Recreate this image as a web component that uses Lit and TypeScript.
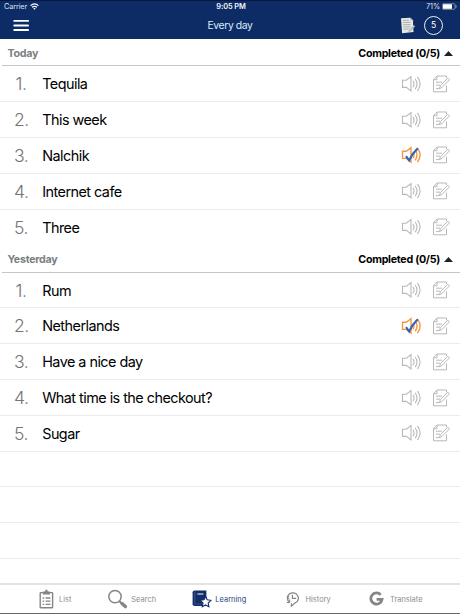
import { LitElement, html, svg, css } from "lit";
import { customElement, property } from "lit/decorators.js";

type Item = { text: string; done?: boolean };
type Group = { title: string; items: Item[] };

const groups: Group[] = [
  {
    title: "Today",
    items: [
      { text: "Tequila" },
      { text: "This week" },
      { text: "Nalchik", done: true },
      { text: "Internet cafe" },
      { text: "Three" },
    ],
  },
  {
    title: "Yesterday",
    items: [
      { text: "Rum" },
      { text: "Netherlands", done: true },
      { text: "Have a nice day" },
      { text: "What time is the checkout?" },
      { text: "Sugar" },
    ],
  },
];

const speaker = (done?: boolean) => html`<svg class="speaker" width="21" height="18" viewBox="0 0 21 18" fill="none"
  stroke=${done ? "#f09a42" : "#b8b8b8"} stroke-width=${done ? 1.4 : 1.1}>
  <path d="M1.5 5.2h3.8L10 1.6v14.4L5.3 12.4H1.5z" />
  <path d="M12.2 6.2q1.7 2.8 0 5.6 M14.4 4.2q3.2 4.8 0 9.6 M16.7 2.4q4.8 6.6 0 13.2" stroke-linecap="round" />
  ${done ? svg`<path d="M5 10.2l3.2 4.2Q11 7.8 16.8 2.2" stroke="#2f62c0" stroke-width="2.1" />` : ""}
</svg>`;

const note = html`<svg width="18" height="18" viewBox="0 0 18 18" fill="none" stroke="#b8b8b8" stroke-width="1">
  <path d="M14.5 3V1H5L1.5 4.7V16.8h13v-6.3 M5 1v3.7H1.5" />
  <path d="M4 7.2h6 M4 10.1h4 M4 13.6h3.4" />
  <path d="M7.4 13.6l1-2.9 7.4-7.6 1.7 1.7-7.4 7.6z" fill="#fff" />
</svg>`;

const tabIcons = {
  list: html`<svg width="16" height="20" viewBox="0 0 16 20" fill="none" stroke="#858585">
    <rect x="1.2" y="3.6" width="12.4" height="15.2" rx=".6" stroke-width="1.4" />
    <path d="M3.8 2.6h2.2Q6.2.5 7.4.5t1.4 2.1h2.2v2.9H3.8z" fill="#858585" stroke="none" />
    <path d="M3.6 9h1.6M3.6 12.2h1.6M3.6 15.4h1.6M6.6 9h4.8M6.6 12.2h4.8M6.6 15.4h4.8" stroke-width="1.3" />
  </svg>`,
  search: html`<svg width="20" height="20" viewBox="0 0 20 20" fill="none" stroke="#858585">
    <circle cx="7" cy="7.6" r="6.2" stroke-width="1.5" />
    <path d="M11.4 12.2l2.2 2" stroke-width="2" />
    <path d="M14 14.6l3.4 3" stroke-width="3.4" stroke-linecap="round" />
  </svg>`,
  learning: html`<svg width="20" height="20" viewBox="0 0 20 20">
    <path d="M2.6 1.4H14.4V17H2.6Q.6 17 .6 15.2V3.2Q.6 1.4 2.6 1.4z" fill="#132d69" />
    <path d="M2 15h9.6M2.8 2.4v11.4" stroke="#5a70a3" stroke-width=".6" />
    <path d="M5.4 5h6" stroke="#fff" stroke-width="1" />
    <path d="M13.6 7.4l1.6 3.4 3.8.5-2.8 2.7.7 3.8-3.3-1.8-3.3 1.8.7-3.8-2.8-2.7 3.8-.5z" fill="#fff" stroke="#132d69" stroke-width="1.1" />
  </svg>`,
  history: html`<svg width="14" height="17" viewBox="0 0 14 17" fill="none" stroke="#858585" stroke-width="1.2">
    <path d="M3.4 11.2A5.5 5.3 0 1 1 8.8 12.1L5.4 15.2V12.3" />
    <path d="M3.2 8.8A4 4 0 0 1 2.8 4.6" stroke-width=".8" />
    <path d="M6.4 3.8v3.5h3.7" />
    <path d="M.9 11.5h2.8V8.8" stroke-width="1" />
  </svg>`,
  translate: html`<svg width="15" height="16" viewBox="0 0 15 16" fill="none" stroke="#858585" stroke-width="2.8">
    <path d="M11.7 3.8A5.6 5.6 0 1 0 13 8.4H7.6" />
  </svg>`,
};

@customElement("word-group")
export class WordGroup extends LitElement {
  @property({ attribute: false }) group!: Group;

  static styles = css`
    :host { display: block; }
    .head {
      box-sizing: border-box; height: 27.2px; display: flex; align-items: center;
      justify-content: space-between; padding: 1px 7px 0 7.5px;
      font-weight: 700; font-size: 10.7px; color: #7b7f82; letter-spacing: -0.28px;
      background: linear-gradient(#c4c5c7, #c4c5c7) 2px 100% / 100% 1px no-repeat;
    }
    .done { color: #000; display: flex; align-items: center; gap: 4px; letter-spacing: -0.28px; }
    .row {
      box-sizing: border-box; height: 35.84px; display: flex; align-items: center;
      border-bottom: 1px solid #ebebed; padding: 0.4px 10.5px 0 14px;
    }
    :host(:not([last])) .row:last-child { border-color: transparent; }
    .num { width: 14px; margin-right: 14.2px; text-align: center; font-size: 17.6px; font-weight: 350; color: #757575; letter-spacing: -0.5px; }
    .text { flex: 1; font-size: 14.4px; color: #000; letter-spacing: -0.53px; }
    .speaker { margin-right: 10px; }
    svg { display: block; }
  `;

  render() {
    return html`
      <div class="head">
        <span>${this.group.title}</span>
        <span class="done">Completed (0/${this.group.items.length})
          <svg width="9" height="5" viewBox="0 0 9 5"><path d="M0 5L4.5 0 9 5z" fill="#222" /></svg>
        </span>
      </div>
      ${this.group.items.map(
        (item, i) => html`<div class="row">
          <span class="num">${i + 1}.</span><span class="text">${item.text}</span>
          ${speaker(item.done)}${note}
        </div>`
      )}
    `;
  }
}

@customElement("app-root")
export class AppRoot extends LitElement {
  static styles = css`
    :host {
      display: flex; flex-direction: column; box-sizing: border-box; height: 614px; width: 460px;
      overflow: hidden; background: #fff; font-family: Inter, "Liberation Sans", sans-serif;
      border-bottom: 1px solid #68686a;
    }
    header { height: 39px; flex: none; background: #0d2b64; color: #fff; box-sizing: border-box; border-top: 1px solid #06163e; }
    .status {
      height: 11px; display: grid; grid-template-columns: 1fr auto 1fr; align-items: center;
      font-size: 7.3px; padding: 0 3px 0 4px; color: #dbe3f2; letter-spacing: -0.12px;
    }
    .time { font-weight: 600; font-size: 7.4px; color: #f2f5fb; letter-spacing: -0.1px; padding-left: 1px; }
    .left, .right { display: flex; align-items: center; gap: 3px; }
    .right { justify-content: flex-end; gap: 2px; }
    .nav { height: 26px; display: grid; grid-template-columns: 1fr auto 1fr; align-items: center; padding: 0 17px 0 13px; }
    .title { font-size: 10.4px; color: #d9ecfa; letter-spacing: -0.4px; padding-left: 4px; }
    .actions { display: flex; justify-content: flex-end; align-items: center; gap: 8.5px; }
    .count {
      width: 19px; height: 19px; box-sizing: border-box; border: 1.5px solid #eaf2fc; border-radius: 50%;
      display: flex; align-items: center; justify-content: center; font-size: 8.5px;
    }
    main { flex: 1; overflow: hidden; }
    .blank { box-sizing: border-box; height: 35.84px; border-bottom: 1px solid #ebebed; }
    nav {
      height: 30px; box-sizing: border-box; border-top: 2px solid #e3e3e4; flex: none;
      display: grid; grid-template-columns: 69px 84px 92px 85px 86px; justify-content: start;
      padding-left: 39px; align-items: center;
    }
    .tab { display: flex; align-items: center; font-size: 7.4px; color: #8b8b8b; letter-spacing: 0.04px; }
    .tab.on { color: #284378; }
    .tab span { margin-left: 4px; }
    .search span, .learning span { margin-left: 3.3px; }
    .history { padding-left: 2px; }
    .history span { margin-left: 5.5px; }
    .translate span { margin-left: 6px; }
    svg { display: block; flex: none; }
  `;

  private tab(name: keyof typeof tabIcons, label: string, on = false) {
    return html`<div class="tab ${name} ${on ? "on" : ""}">${tabIcons[name]}<span>${label}</span></div>`;
  }

  render() {
    return html`
      <header>
        <div class="status">
          <div class="left">Carrier
            <svg width="9" height="7" viewBox="0 0 9 7" fill="none" stroke="#fff" stroke-width="1.2">
              <path d="M.5 2.6q4-3.4 8 0M2 4.3q2.5-2 5 0" /><path d="M3.2 5.4L4.5 6.8 5.8 5.4q-1.3-.9-2.6 0z" fill="#fff" stroke="none" />
            </svg>
          </div>
          <div class="time">9:05 PM</div>
          <div class="right">71%
            <svg width="15" height="7" viewBox="0 0 15 7">
              <rect x=".4" y=".7" width="12.6" height="5.6" rx="1" fill="none" stroke="#9dabc9" stroke-width=".7" />
              <rect x="1" y="1.2" width="9" height="4.6" fill="#fff" /><path d="M14 2.4v2.2" stroke="#9dabc9" />
            </svg>
          </div>
        </div>
        <div class="nav">
          <svg width="16" height="12" viewBox="0 0 16 12"><path d="M1.2 1.9h14M1.2 6.5h14M1.2 11h14" stroke="#fff" stroke-width="1.8" stroke-linecap="round" /></svg>
          <div class="title">Every day</div>
          <div class="actions">
            <svg width="16" height="17" viewBox="0 0 16 17">
              <path d="M1 1.2l9.4-.5 2.5 2.6.6 11.7-11.4 1.2z" fill="#e9eae6" />
              <path d="M3 3.4l6-.2M3 5.6l7.6-.2M3.1 7.8l7.5-.2M3.2 10l7.4-.2M3.3 12.2l6-.3" stroke="#9a9d9e" stroke-width=".8" />
              <path d="M10.4.7v2.8l2.5-.2z" fill="#b6babd" />
              <path d="M8.8 13.5l5-5.4 1.4 1.2-5 5.4-2.1.4z" fill="#b8bab8" />
            </svg>
            <div class="count">5</div>
          </div>
        </div>
      </header>
      <main>
        ${groups.map((g, i) => html`<word-group .group=${g} ?last=${i === groups.length - 1}></word-group>`)}
        ${[0, 1, 2].map(() => html`<div class="blank"></div>`)}
      </main>
      <nav>
        ${this.tab("list", "List")}${this.tab("search", "Search")}${this.tab("learning", "Learning", true)}
        ${this.tab("history", "History")}${this.tab("translate", "Translate")}
      </nav>
    `;
  }
}
